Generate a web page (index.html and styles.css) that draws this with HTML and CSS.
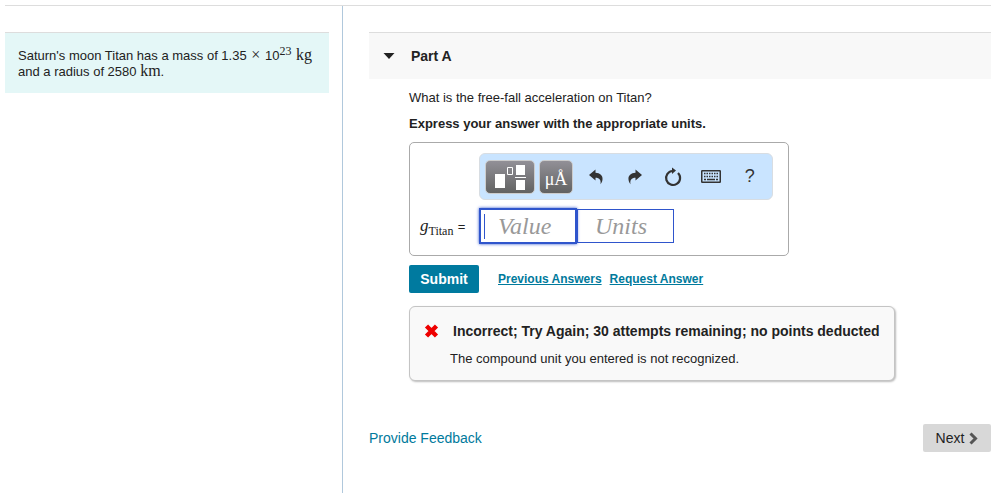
FILE: index.html
```html
<!DOCTYPE html>
<html lang="en">
<head>
    <meta charset="UTF-8">
    <meta name="viewport" content="width=device-width, initial-scale=1.0">
    <title>Free-fall acceleration on Titan</title>
    <link rel="stylesheet" href="styles.css">
</head>
<body>
    <div class="page">
        <aside class="sidebar">
            <p class="problem">Saturn's moon Titan has a mass of 1.35 <span class="times">×</span> 10<sup>23</sup> <span class="unit">kg</span> and a radius of 2580 <span class="unit">km</span>.</p>
        </aside>

        <main class="main">
            <h1 class="part-header">
                <svg class="arrow" width="12" height="6" viewBox="0 0 12 6" aria-hidden="true"><path d="M0.500 0H11.500L6 6z" fill="#222"/></svg>
                Part A
            </h1>

            <div class="part-body">
                <p class="question">What is the free-fall acceleration on Titan?</p>
                <p class="instructions">Express your answer with the appropriate units.</p>

                <form class="answer" onsubmit="return false">
                    <div class="answer-box">
                        <div class="toolbar">
                            <button type="button" class="template-button wide" aria-label="Templates">
                                <svg width="32" height="26" viewBox="0 0 32 26">
                                    <g fill="#fff">
                                        <path d="M1 10h10v14H1z"/>
                                        <path d="M22 1h9v10h-9zM22 16h9v10h-9zM21 13h11v1H21z"/>
                                    </g>
                                    <path d="M13.500 3.500h5v7h-5z" fill="none" stroke="#fff"/>
                                </svg>
                            </button>
                            <button type="button" class="template-button symbols" aria-label="Symbols">μÅ</button>
                            <div class="tools">
                                <button type="button" class="tool" aria-label="Undo">
                                    <svg width="16" height="16" viewBox="0 0 16 16"><path d="M1 6L7.500 0.500V3.800C12 4 15 6.500 14.500 10.500C14.300 12.500 13.400 14.200 12.500 15.200C13.200 11 11.500 8.700 7.500 8.700V11.500z" fill="#333"/></svg>
                                </button>
                                <button type="button" class="tool" aria-label="Redo">
                                    <svg width="16" height="16" viewBox="0 0 16 16"><path d="M15 6L8.500 0.500V3.800C4 4 1 6.500 1.500 10.500C1.700 12.500 2.600 14.200 3.500 15.200C2.800 11 4.500 8.700 8.500 8.700V11.500z" fill="#333"/></svg>
                                </button>
                                <button type="button" class="tool" aria-label="Reset">
                                    <svg width="18" height="20" viewBox="0 0 18 20"><path d="M14 6A7 7 0 1 1 8.500 4" fill="none" stroke="#333" stroke-width="2.200"/><path d="M8 0.500L12 3.500L8 7z" fill="#333"/></svg>
                                </button>
                                <button type="button" class="tool" aria-label="Keyboard shortcuts">
                                    <svg width="20" height="13" viewBox="0 0 20 13">
                                        <rect x="0.750" y="0.750" width="18.500" height="11.500" rx="0.500" fill="none" stroke="#333" stroke-width="1.500"/>
                                        <path d="M3 3.500h14M3 6.500h14" stroke="#333" stroke-width="1.500" stroke-dasharray="1.500 1"/>
                                        <path d="M3 9.500h2M6 9.500h8M15 9.500h2" stroke="#333" stroke-width="1.500"/>
                                    </svg>
                                </button>
                                <button type="button" class="tool help" aria-label="Help">?</button>
                            </div>
                        </div>
                        <div class="entry">
                            <label class="variable" for="value"><i>g</i><sub>Titan</sub> <span class="equals">=</span></label>
                            <span class="value-field">
                                <input type="text" class="field active" id="value" placeholder="Value">
                            </span>
                            <input type="text" class="field" id="units" placeholder="Units" aria-label="Units">
                        </div>
                    </div>

                    <div class="actions">
                        <button type="submit" class="submit">Submit</button>
                        <a href="#previous">Previous Answers</a>
                        <a href="#request">Request Answer</a>
                    </div>
                </form>

                <section class="feedback">
                    <h2 class="feedback-title">
                        <svg width="15" height="14" viewBox="0 0 15 14" aria-hidden="true"><path d="M2.500 2L12.500 12M12.500 2L2.500 12" stroke="#ee0000" stroke-width="4.500"/></svg>
                        Incorrect; Try Again; 30 attempts remaining; no points deducted
                    </h2>
                    <p class="feedback-text">The compound unit you entered is not recognized.</p>
                </section>
            </div>

            <footer class="footer">
                <a href="#feedback">Provide Feedback</a>
                <button type="button" class="next">
                    Next
                    <svg width="9" height="13" viewBox="0 0 9 13" aria-hidden="true"><path d="M1.500 1.500L6.500 6.500L1.500 11.500" fill="none" stroke="#555" stroke-width="3"/></svg>
                </button>
            </footer>
        </main>
    </div>
</body>
</html>
```
FILE: styles.css
```css
* {
    box-sizing: border-box;
}

body {
    margin: 0;
    padding: 5px 17px 0 5px;
    background: #fff;
    color: #222;
    font-family: "Liberation Sans", Arial, sans-serif;
    font-size: 13px;
    line-height: 16px;
}

h1, h2, p {
    margin: 0;
}

button {
    padding: 0;
    border: none;
    font-family: inherit;
    cursor: pointer;
}

a {
    color: #007a9c;
}

.page {
    display: flex;
    min-height: calc(100vh - 5px);
    border-top: 1px solid #ddd;
}

/* Left column */
.sidebar {
    flex: none;
    width: 338px;
    padding: 26px 13px 0 0;
    border-right: 1px solid #b0c8dc;
}

.problem {
    padding: 15px 13px 13px;
    border-top: 1px solid #ddd;
    background: #e4f7f7;
}

.problem sup {
    margin-right: 1px;
    font-family: "Liberation Serif", serif;
    font-size: 12px;
    line-height: 0;
}

.times,
.unit {
    font-family: "Liberation Serif", serif;
    font-size: 16px;
    line-height: 0;
}

.times {
    margin: 0 1px;
}

/* Question */
.main {
    flex: 1;
    padding: 26px 0 0 26px;
}

.part-header {
    display: flex;
    align-items: center;
    gap: 16px;
    height: 47px;
    padding-left: 14px;
    border-top: 1px solid #ddd;
    background: #f8f8f8;
    font-size: 14px;
}

.part-body {
    padding: 11px 0 0 40px;
}

.instructions {
    margin-top: 10px;
    font-weight: bold;
}

.answer-box {
    width: 380px;
    margin-top: 10px;
    padding: 10px 15px 11px 10px;
    border: 1px solid #aaa;
    border-radius: 5px;
}

.toolbar {
    display: flex;
    align-items: center;
    gap: 4px;
    height: 47px;
    margin-left: 59px;
    padding: 0 3px 0 5px;
    border: 1px solid #d8dde2;
    border-radius: 6px;
    background: #c9e4ff;
}

.template-button {
    display: flex;
    align-items: center;
    justify-content: center;
    width: 34px;
    height: 34px;
    border: 1px solid #ccc;
    border-radius: 5px;
    background: linear-gradient(#929097, #626262);
    color: #fff;
}

.wide {
    width: 50px;
}

.symbols {
    padding-top: 5px;
    font-family: "Liberation Serif", serif;
    font-size: 18px;
}

.tools {
    display: flex;
    flex: 1;
}

.tool {
    display: flex;
    flex: 1;
    align-items: center;
    justify-content: center;
    background: none;
    color: #333;
}

.help {
    font-size: 18px;
}

.entry {
    display: flex;
    align-items: center;
    margin-top: 8px;
}

.variable {
    width: 59px;
    font-family: "Liberation Serif", serif;
    font-size: 17px;
}

.variable sub {
    font-size: 12px;
    line-height: 0;
}

.equals {
    font-family: "Liberation Sans", Arial, sans-serif;
    font-size: 13px;
}

.value-field {
    position: relative;
    display: flex;
}

/* Caret shown in the empty value box */
.value-field:has(:placeholder-shown)::before {
    content: "";
    position: absolute;
    top: 6px;
    left: 5px;
    width: 1px;
    height: 25px;
    background: #2f55cc;
}

.field {
    width: 97px;
    height: 34px;
    padding: 0 17px;
    border: 1px solid #2f55cc;
    outline: none;
    font-family: "Liberation Serif", serif;
    font-size: 24px;
}

.field::placeholder {
    color: #999;
    font-style: italic;
    opacity: 1;
}

.active {
    width: 98px;
    height: 36px;
    border-width: 2px;
    box-shadow: 0 0 3px #2f55cc;
}

.actions {
    display: flex;
    align-items: center;
    gap: 8px;
    margin-top: 9px;
    font-size: 12px;
    font-weight: bold;
}

.submit {
    width: 70px;
    height: 28px;
    margin-right: 11px;
    border-radius: 2px;
    background: #007a9f;
    color: #fff;
    font-size: 14px;
    font-weight: bold;
}

.feedback {
    width: fit-content;
    margin-top: 13px;
    padding: 16px 14px 13px;
    border: 1px solid #c4c4c4;
    border-radius: 6px;
    background: #f9f9f9;
    box-shadow: 1px 1px 2px #bbb;
}

.feedback-title {
    display: flex;
    align-items: center;
    gap: 14px;
    font-size: 14px;
}

.feedback-text {
    margin-top: 12px;
    padding-left: 26px;
}

.footer {
    display: flex;
    align-items: center;
    justify-content: space-between;
    margin-top: 43px;
    font-size: 14px;
}

.footer a {
    text-decoration: none;
}

.next {
    display: flex;
    align-items: center;
    justify-content: center;
    gap: 5px;
    width: 68px;
    height: 28px;
    border-radius: 2px;
    background: #d8d8d8;
    color: #222;
    font-size: 14px;
}
```
